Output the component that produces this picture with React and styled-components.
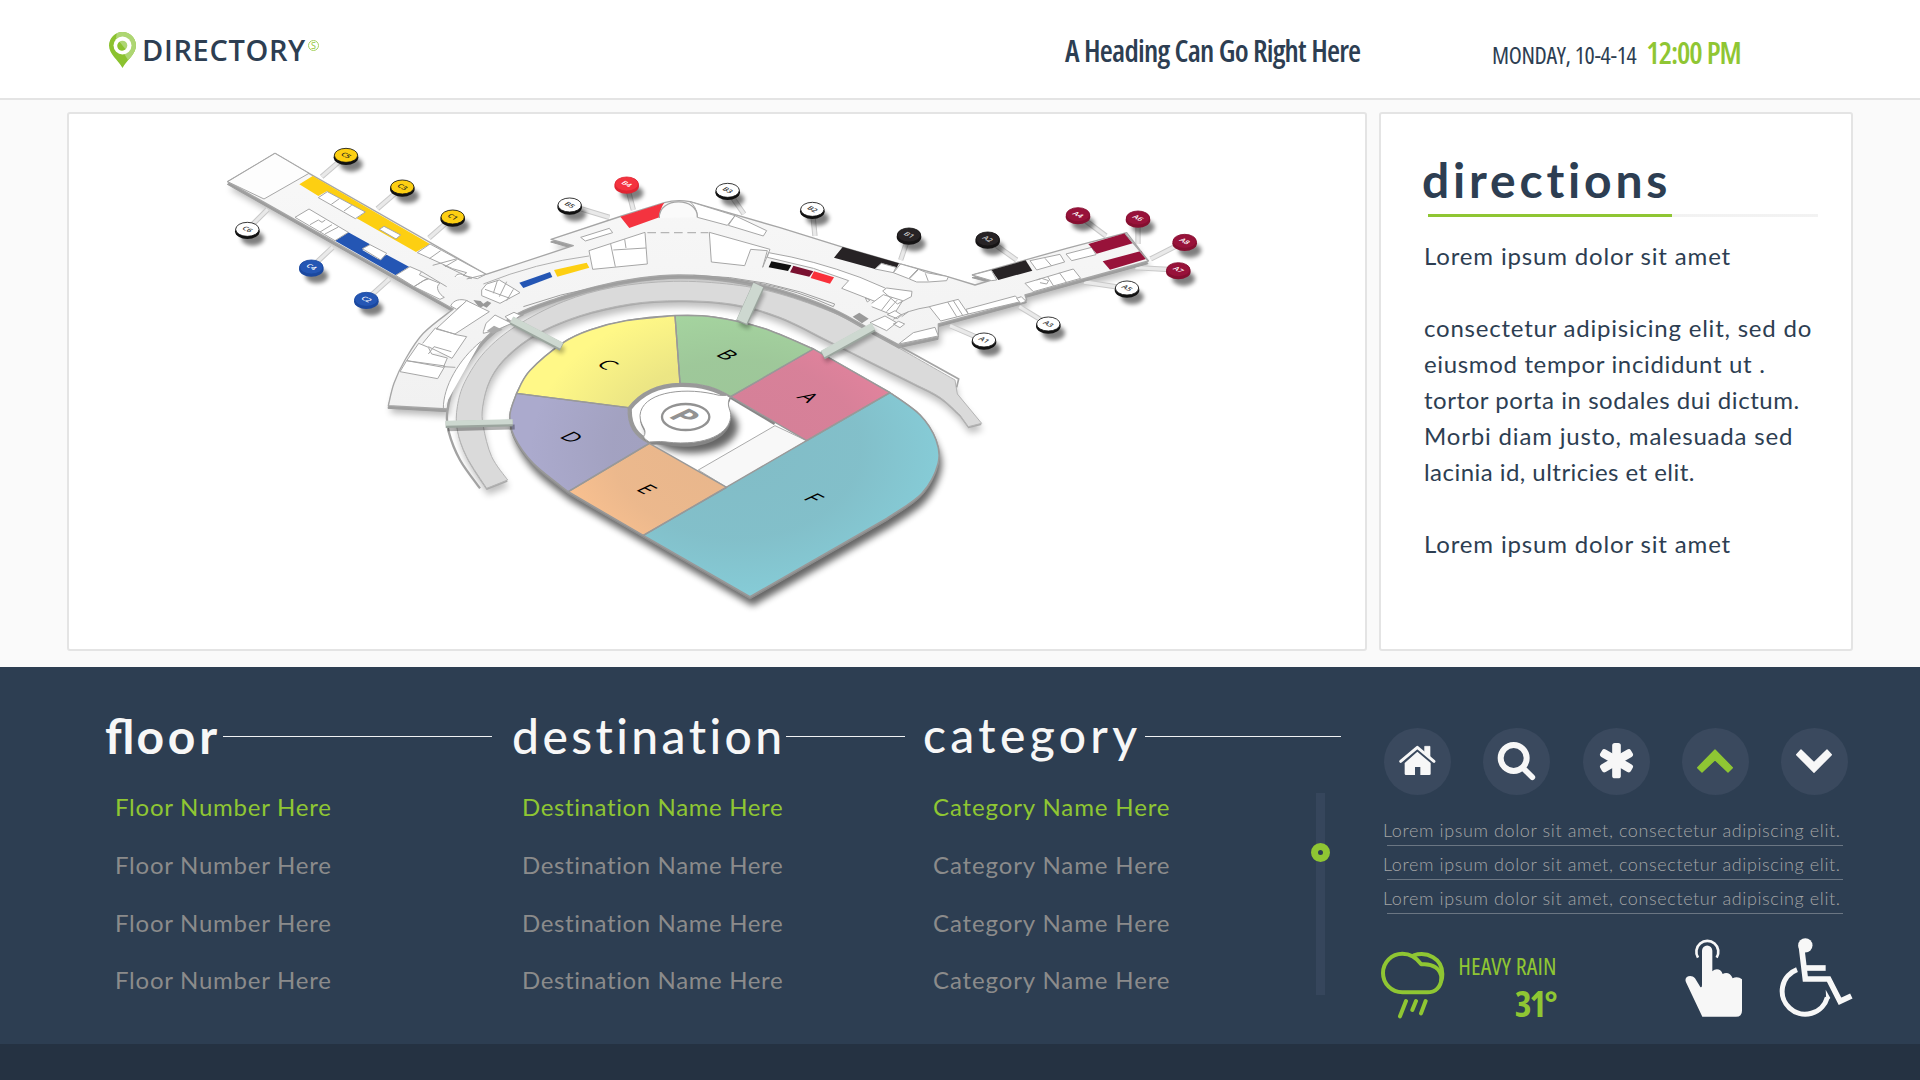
import React from "react";
import styled, { createGlobalStyle } from "styled-components";

const GlobalStyle = createGlobalStyle`
  * { box-sizing: border-box; }
  body { margin: 0; background: #fafafa; }
  h1, h2, p, ul { margin: 0; padding: 0; }
`;

const navy = "#2d3e52";
const green = "#8fc633";
const pale = "#f7f7f7";
const rounded = `Lato, "Open Sans", sans-serif`;
const humanist = `"Open Sans", "Noto Sans", sans-serif`;

/* ---------- page ---------- */

const Page = styled.div`
  width: 1920px;
  height: 1080px;
  display: flex;
  flex-direction: column;
  overflow: hidden;
  color: ${navy};
  font-family: ${rounded};
`;

const Header = styled.header`
  flex: none;
  height: 100px;
  display: grid;
  grid-template-columns: 955px 428px auto;
  align-items: start;
  padding-left: 109px;
  background: #fff;
  border-bottom: 2px solid #e4e4e4;
`;

const Brand = styled.div`
  display: flex;
  align-items: flex-start;
  padding-top: 32px;
`;

const BrandName = styled.div`
  margin: -2px 0 0 5px;
  padding-left: 1px;
  font: 600 29px/40px ${humanist};
  letter-spacing: 0.65px;
`;

const BrandMark = styled.span`
  margin: 8px 0 0 2px;
  width: 11px;
  height: 11px;
  border: 1px solid #a6d25f;
  border-radius: 50%;
  color: ${green};
  font: 400 9px/9px ${humanist};
  text-align: center;
`;

const Tagline = styled.h1`
  padding: 30px 0 0 1px;
  font: 600 30px/42px ${humanist};
  font-stretch: 75%;
  letter-spacing: -0.8px;
  word-spacing: 0.6px;
`;

const Clock = styled.div`
  display: flex;
  align-items: baseline;
  gap: 10px;
  padding-top: 32px;
  font: 500 24px/42px ${humanist};
  font-stretch: 75%;
  letter-spacing: -0.35px;
`;

const Time = styled.span`
  color: ${green};
  font-size: 30px;
  font-weight: 600;
  letter-spacing: -1.15px;
  word-spacing: 1px;
`;

/* ---------- upper panels ---------- */

const Panels = styled.main`
  flex: none;
  height: 567px;
  display: grid;
  grid-template-columns: 1300px 474px;
  gap: 12px;
  padding: 12px 67px 16px;
`;

const Card = styled.section`
  background: #fff;
  border: 2px solid #e4e4e4;
  border-radius: 3px;
  overflow: hidden;
`;

const MapCanvas = styled.svg`
  display: block;
  width: 1296px;
  height: 535px;
`;

const DirectionsCard = styled(Card)`
  padding: 36px 32px 0 41px;
`;

const DirectionsTitle = styled.h2`
  font: 700 48px/60px ${rounded};
  letter-spacing: 3.8px;
`;

const Rule = styled.div`
  display: flex;
  height: 3px;
  margin: 4px 0 21px 6px;
`;

const RuleSolid = styled.div`
  width: 244px;
  background: ${green};
`;

const RuleDots = styled.div`
  width: 146px;
  background: radial-gradient(circle, #d6d6d6 0.5px, transparent 0.8px) 0 0 / 2px 2px;
`;

const DirectionsText = styled.div`
  padding-left: 2px;
  font-size: 24px;
  line-height: 36px;
`;

const Line = styled.p`
  min-height: 36px;
  letter-spacing: ${(p) => p.$track}px;
  white-space: nowrap;
`;

/* ---------- lower panel ---------- */

const Lower = styled.section`
  flex: none;
  height: 377px;
  display: grid;
  grid-template-columns: 407px 411px 393px 62px 1fr;
  padding-left: 106px;
  background: ${navy};
`;

const FooterBar = styled.footer`
  flex: 1;
  background: #253242;
`;

const Column = styled.div`
  padding-top: 38px;
`;

const ColumnHead = styled.div`
  display: flex;
  align-items: center;
  height: 62px;
  width: ${(p) => p.$width}px;
  gap: ${(p) => p.$gap}px;

  &::after {
    content: "";
    flex: 1;
    height: 1px;
    background: #f0f2f4;
  }
`;

const ColumnTitle = styled.h2`
  color: ${pale};
  font: ${(p) => p.$weight || 500} 48px/62px ${rounded};
  letter-spacing: ${(p) => p.$track}px;
  margin: 0 ${(p) => -p.$track}px 0 -1px;
  padding-bottom: ${(p) => p.$raise || 0}px;
`;

const Ligature = styled.span`
  letter-spacing: 0;
  margin-right: 2px;
`;

const List = styled.ul`
  list-style: none;
  padding: 11px 0 0 ${(p) => p.$indent}px;
`;

const Item = styled.li`
  height: 57.8px;
  font-size: 24px;
  line-height: 58px;
  letter-spacing: ${(p) => p.$track}px;
  color: ${(p) => (p.$active ? green : "#8b8b8b")};
  white-space: nowrap;
`;

const ScrollTrack = styled.div`
  width: 9px;
  height: 202px;
  margin: 126px 0 0 -1px;
  background: #36465c;
`;

const ScrollKnob = styled.div`
  position: relative;
  left: -5px;
  top: 50px;
  width: 19px;
  height: 19px;
  border: 7px solid ${green};
  border-radius: 50%;
  background: ${navy};
`;

const Side = styled.aside`
  padding: 61px 0 0 5px;
`;

const Buttons = styled.div`
  display: flex;
  gap: 32.25px;
`;

const RoundButton = styled.button`
  width: 67px;
  height: 67px;
  padding: 0;
  border: 0;
  border-radius: 50%;
  background: #3a495e;
  color: ${(p) => (p.$active ? green : pale)};

  svg {
    display: block;
    width: 67px;
    height: 67px;
  }
`;

const Notes = styled.div`
  padding-top: 17px;
`;

const Note = styled.p`
  width: 460px;
  height: 34px;
  margin-left: -1px;
  color: #a4a5a6;
  font: 300 18px/37px ${rounded};
  letter-spacing: 0.61px;
  white-space: nowrap;
  background: linear-gradient(#6b7683, #6b7683) 4px 33px / 456px 1px no-repeat;
`;

const Extras = styled.div`
  display: flex;
  align-items: flex-start;
  margin: 24px 0 0 -3px;
`;

const CloudIcon = styled.svg`
  width: 64px;
  height: 68px;
  margin-top: 13px;
  color: ${green};
`;

const Weather = styled.div`
  width: 111px;
  padding-top: 11px;
  color: ${green};
  text-align: right;
  font-family: ${humanist};
  font-stretch: 75%;
`;

const Condition = styled.div`
  font-size: 24px;
  line-height: 34px;
  letter-spacing: 0.1px;
  margin-right: -0.5px;
`;

const Temperature = styled.div`
  font-size: 36px;
  font-weight: 700;
  line-height: 41px;
  letter-spacing: -2px;
  margin-right: 0.5px;
`;

const TouchIcon = styled.svg`
  width: 58px;
  height: 80px;
  margin-left: 129px;
  color: ${pale};
`;

const WheelchairIcon = styled.svg`
  width: 74px;
  height: 80px;
  margin-left: 36px;
  color: ${pale};
`;

/* ---------- icons ---------- */

const PinLogo = () => (
  <svg width="27" height="36" viewBox="0 0 27 36">
    <defs>
      <clipPath id="pin">
        <path d="M13.5 36C9 28 0 22 0 13.5a13.5 13.5 0 1 1 27 0C27 22 18 28 13.500 36z" />
      </clipPath>
    </defs>
    <g clipPath="url(#pin)">
      <path fill="#8bc22f" d="M0 0h27v36H0z" />
      <path fill="#aed673" d="M8 0h19v22l-8 6-5-8L7 6z" />
    </g>
    <circle cx="13.500" cy="13.500" r="9" fill="#fff" />
    <circle cx="13.500" cy="13.500" r="4.800" fill="#aed673" />
    <path d="M10.500 9.800a4.800 4.800 0 1 0 6 7.400z" fill="#8bc22f" />
  </svg>
);

const HomeIcon = () => (
  <svg viewBox="72 84 201 201" fill="currentColor">
    <path d="M194 139h16v33l-16-14z" stroke="currentColor" strokeWidth="2" strokeLinejoin="round" />
    <path d="M122 184l50-42 50 42" fill="none" stroke="currentColor" strokeWidth="9" strokeLinecap="round" strokeLinejoin="round" />
    <path d="M172 155l40 34v32q0 4-4 4h-27v-24h-16v24h-27q-4 0-4-4v-32z" />
  </svg>
);

const SearchIcon = () => (
  <svg viewBox="369 84 201 201" fill="none" stroke="currentColor">
    <circle cx="461" cy="174" r="39" strokeWidth="18" />
    <path d="M489 204l28 28" strokeWidth="17" strokeLinecap="round" />
  </svg>
);

const AsteriskIcon = () => (
  <svg viewBox="668.5 84 201 201" fill="currentColor">
    {[0, 60, 120].map((a) => (
      <rect key={a} x="756" y="129" width="26" height="106" rx="8" transform={`rotate(${a} 769 182)`} />
    ))}
  </svg>
);

const UpIcon = () => (
  <svg viewBox="966 84 201 201" fill="currentColor" stroke="currentColor" strokeWidth="4" strokeLinejoin="round">
    <path d="M1065 150l52 53-13 13-39-37-39 37-13-13z" />
  </svg>
);

const DownIcon = () => (
  <svg viewBox="1263 84 201 201" fill="currentColor" stroke="currentColor" strokeWidth="4" strokeLinejoin="round">
    <path d="M1362 217l-52-53 13-14 39 38 39-38 13 14z" />
  </svg>
);

const Cloud = () => (
  <CloudIcon viewBox="62 153 192 204" fill="none" stroke="currentColor" strokeWidth="12" strokeLinecap="round" strokeLinejoin="round">
    <path d="M126 277a57.500 57.500 0 0 1 0-116c26 0 44 14 57 32 34-4 60 14 60 42 0 26-18 42-42 42z" />
    <path d="M160 166c40-12 86 8 86 56 0 8-1 14-3 20" />
    <path d="M137 303l-18 46M167 303l-11 27M196 303l-14 37" />
  </CloudIcon>
);

const Touch = () => (
  <TouchIcon viewBox="975 117 174 240" fill="currentColor">
    <path d="M1014 176a33 33 0 1 1 56 0" fill="none" stroke="currentColor" strokeWidth="8" />
    <path d="M1026 155a15.500 15.500 0 0 1 31 0v62c9-9 25-9 31 8 10-6 24-4 30 13 9-5 20-4 28 3v94q0 18-18 18h-101l-49-103c-8-18 16-26 27-12l16 26q5 3 5-6z" />
  </TouchIcon>
);

const Wheelchair = () => (
  <WheelchairIcon viewBox="1257 117 222 240" fill="none" stroke="currentColor" strokeWidth="17">
    <circle cx="1336" cy="139" r="21.500" fill="currentColor" stroke="none" />
    <path d="M1324 140l12 100h70l34 67 34-16" />
    <path d="M1336 207h61" />
    <path d="M1311 212a69 69 0 1 0 91 83" strokeWidth="15" />
    <path d="M1397 272l14 25-12 10z" fill="currentColor" stroke="none" />
  </WheelchairIcon>
);

/* ---------- terminal map ---------- */

/* Smooth open curve through a list of points. */
const curve = (pts, start = "M") => {
  let d = `${start}${pts[0][0]} ${pts[0][1]}`;
  for (let i = 0; i < pts.length - 1; i++) {
    const a = pts[i - 1] || pts[i];
    const b = pts[i];
    const c = pts[i + 1];
    const e = pts[i + 2] || c;
    d += `C${b[0] + (c[0] - a[0]) / 6} ${b[1] + (c[1] - a[1]) / 6} ${c[0] - (e[0] - b[0]) / 6} ${c[1] - (e[1] - b[1]) / 6} ${c[0]} ${c[1]}`;
  }
  return d;
};

const innerWall = [[1258, 555], [1180, 513], [1060, 447], [900, 389], [750, 356], [600, 345], [480, 354], [350, 379], [230, 415], [110, 462], [20, 530], [-50, 620], [-88, 700], [-98, 747]];
const pierWall = [[-275, 737], [-258, 670], [-225, 600], [-170, 520], [-80, 447]];
const terminal =
  "M-757 65L-615-20L-513 40L18 343L280 257L213 238L425 168L553 128Q590 118 630 125L900 203L1090 262L1255 310L1410 352L1485 375L1535 360L1477 345L1760 265L1940 218L2005 303L1635 405L1640 420L1375 492V530" +
  curve(innerWall, "L") + curve(pierWall, "L") + "Z";

const roadOuter = [[20, 985], [-40, 890], [-68, 810], [-68, 740], [-45, 665], [15, 575], [110, 497], [250, 425], [400, 382], [580, 364], [760, 374], [900, 402], [1060, 458], [1160, 510], [1260, 566], [1425, 660]];
const roadInner = [[1440, 765], [1380, 712], [1300, 670], [1160, 600], [1050, 545], [900, 472], [760, 433], [600, 422], [450, 432], [300, 467], [170, 522], [80, 590], [30, 660], [8, 740], [10, 800], [35, 890], [83, 960]];
const road = curve(roadOuter) + "L1432 702L1505 790L1465 800" + curve(roadInner, "L") + "Z";

const arenaEdge =
  curve([[110, 700], [150, 632], [250, 548], [330, 510], [440, 482], [585, 467], [700, 471], [850, 505], [1000, 567]]) +
  "L1230 698" +
  curve([[1230, 698], [1320, 765], [1368, 840], [1374, 910], [1325, 1000], [1220, 1075]], "L") +
  "L810 1310L265 995" +
  curve([[265, 995], [160, 910], [103, 830], [90, 765], [110, 700]], "L") + "Z";

const sectors = [
  { id: "C", fill: "#fff887", x: 383, y: 614, d: curve([[110, 700], [150, 632], [250, 548], [330, 510], [440, 482], [585, 467]]) + "L600 670Q500 672 445 743Z" },
  { id: "B", fill: "#a6d6a0", x: 742, y: 585, d: curve([[585, 467], [700, 471], [850, 505], [1000, 567]]) + "L752 710Q690 668 600 670Z" },
  { id: "A", fill: "#e8849f", x: 985, y: 712, d: "M752 710L1000 567L1230 698L980 842Z" },
  { id: "D", fill: "#abaacd", x: 275, y: 832, d: "M110 700L445 743Q440 820 508 850L265 995" + curve([[265, 995], [160, 910], [103, 830], [90, 765], [110, 700]], "L") + "Z" },
  { id: "E", fill: "#ffc491", x: 500, y: 988, d: "M508 850L740 982L490 1126L265 995Z" },
  { id: "F", fill: "#86ccd7", x: 1001, y: 1014, d: "M490 1126L980 842L1230 698" + curve([[1230, 698], [1320, 765], [1368, 840], [1374, 910], [1325, 1000], [1220, 1075]], "L") + "L810 1310Z" },
];

/* Gate badges: label, position, stalk end, face colour, rim colour, text colour. */
const YEL = ["#fdcf12", "#111", "#222"];
const WHT = ["#fff", "#111", "#333"];
const BLU = ["#2456b4", "#1b489f", "#fff"];
const RED = ["#f4333f", "#e02532", "#fff"];
const BLK = ["#272325", "#161415", "#ccc"];
const MAR = ["#98123a", "#850f30", "#fff"];
const gates = [
  ["C5", -402, -13, -475, 50, YEL], ["C3", -233, 82, -308, 146, YEL], ["C1", -82, 172, -153, 234, YEL],
  ["C6", -698, 209, -637, 148, WHT], ["C4", -506, 322, -442, 262, BLU], ["C2", -341, 419, -272, 357, BLU],
  ["B5", 269, 136, 388, 172, WHT], ["B4", 440, 73, 460, 150, RED], ["B3", 743, 92, 792, 162, WHT],
  ["B2", 997, 149, 1005, 228, WHT], ["B1", 1287, 226, 1262, 300, BLK], ["A2", 1523, 238, 1610, 300, BLK],
  ["A4", 1794, 165, 1878, 228, MAR], ["A6", 1974, 175, 1974, 252, MAR], ["A8", 2114, 245, 2012, 297, MAR],
  ["A7", 2095, 330, 1966, 323, MAR], ["A5", 1941, 385, 1812, 366, WHT], ["A3", 1705, 493, 1618, 440, WHT],
  ["A1", 1512, 541, 1410, 497, WHT],
];

const bridges = [
  [[95, 478], [245, 557], 20], [[835, 375], [785, 485], 32], [[1180, 498], [1028, 582], 22], [[-103, 790], [98, 785], 15],
];

const Shop = ({ d, fill = "#fff", plain }) => (
  <path d={d} fill={fill} stroke={plain ? "none" : "#a6a6a6"} strokeWidth="3" strokeLinejoin="round" />
);

const WestPier = () => (
  <g transform="translate(-810 -90)">
    <Shop d="M53 155L195 70L297 130L162 207Z" fill="#fdfdfd" />
    <Shop plain fill="#fdcf12" d="M268 163L308 138L660 342L618 366L440 265L465 247L350 184L325 198Z" />
    <Shop d="M325 203L352 185L466 246L436 266ZM364 223L388 206M402 243L425 226M508 298L522 289L572 315L558 327Z" />
    <Shop plain fill="#2456b4" d="M375 332L415 307L480 343L457 360L505 388L530 374L597 410L557 436Z" />
    <Shop d="M457 356L480 344L530 370L512 390Z" />
    <Shop d="M255 262L297 237L415 307L375 332ZM300 284L325 270L336 277L346 270M330 306L366 284M345 312L385 291" />
    <Shop d="M622 368L660 342L828 433L802 446L760 436L770 428L728 416ZM658 386L692 362M668 406L738 387M705 410L742 388M735 441C740 430 756 430 762 437" />
    <Shop d="M557 436L600 410L635 425L628 434L655 447L640 452L612 470ZM612 470L652 445L690 460C672 470 690 496 703 502L690 508ZM635 425L710 470" />
    <Shop d="M722 528C730 510 750 505 772 512L740 538Z" />
    <Shop d="M815 480L830 462L868 450L915 478L930 488L870 520L815 497ZM825 478L900 505M862 452L850 490M890 455L868 500M910 478L890 512" />
    <Shop plain fill="#999" d="M790 510l22 3 8 8 12-8 12 6-14 14-10-5-10 5-8-8z" />
    <Shop d="M678 597L770 512L838 545L735 612ZM638 640L676 594L738 614L770 620L726 685L655 650M590 692L626 640L655 652L665 672L712 684L700 712ZM655 672L672 650L724 665M570 725L590 692L705 708L683 746ZM700 710L736 712M700 835C700 770 745 690 812 635" />
    <Shop d="M820 605L828 580L855 555L905 580L860 600L820 610Z" />
    <Shop plain fill="#aaa" d="M830 603l22-16 26 12-30 12z" />
    <Shop d="M885 560L912 547L932 556L905 575Z" />
    <path d="M770 447L828 433M785 446L700 405" stroke="#a6a6a6" strokeWidth="3" fill="none" />
    <Shop plain fill="#2456b4" d="M928 458L1020 426L1027 441L940 474Z" />
    <Shop plain fill="#fdcf12" d="M1032 420L1130 398L1138 413L1042 440Z" />
  </g>
);

const Concourse = () => (
  <g>
    <Shop plain fill="#f4333f" d="M421 170L553 128Q540 146 538 172L448 204Z" />
    <Shop d="M302 232L388 205L398 218L316 243Z" />
    <Shop d="M327 272L495 217L502 312L338 328ZM392 252L406 320M434 238L438 264M400 270L498 264" />
    <path d="M502 218H685" stroke="#b5b5b5" strokeWidth="4" strokeDasharray="26 14" fill="none" />
    <Shop d="M688 217L870 268L848 322L862 272L812 268L794 317L694 306Z" />
    <Shop d="M630 125L765 167L742 196L652 172Q650 140 630 125ZM765 167L860 212L850 228L745 196Z" />
    <path d="M538 174C535 110 655 110 652 172" fill="#fafafa" stroke="#a6a6a6" strokeWidth="4" />
    <Shop plain fill="#111" d="M874 304L934 316L924 333L866 322Z" />
    <Shop plain fill="#7a1130" d="M940 317L1000 334L988 350L930 337Z" />
    <Shop plain fill="#f9303a" d="M1002 334L1062 352L1050 371L992 354Z" />
    <path d="M10 372Q170 308 327 288" fill="none" stroke="#b0b0b0" strokeWidth="3" />
    <Shop d="M866 278Q1000 300 1140 352L1215 384L1235 400L1200 430L1085 385L1106 362L1000 325L862 292Z" />
    <path d="M130 440Q350 362 600 353T1060 440L1064 432Q860 350 640 346" fill="none" stroke="#9f9f9f" strokeWidth="3" />
  </g>
);

const EastPier = () => (
  <g transform="translate(900 0)">
    <Shop plain fill="#272325" d="M188 261L357 310L350 323L305 310L285 327L162 293Z" />
    <Shop d="M285 327L304 310L348 322L340 338ZM340 338L362 312L414 327L386 356ZM388 357L416 328L440 338L505 350L500 362L445 366L410 366ZM436 340L445 364" />
    <Shop d="M308 393L320 384L396 394L394 410L352 432ZM275 430L310 404L368 422L340 466L275 440M305 450L335 412M320 455L352 420M256 414L270 420L262 426Z" />
    <Shop d="M270 488L315 468L350 488L320 512ZM340 492L356 484L374 492L360 503ZM322 464L345 452L365 465L352 476Z" />
    <Shop plain fill="#999" d="M218 470l20-12 28 18-20 14z" />
    <path d="M340 478Q380 450 450 440M365 470L385 455" stroke="#a6a6a6" strokeWidth="3" fill="none" />
    <Shop d="M448 440L535 418L565 462L482 483ZM503 426L530 470M520 422L548 466M558 448L706 408L722 425L565 462Z" />
    <Shop d="M356 552L400 518L465 502L475 528Z" />
    <Shop d="M710 415L724 410L738 424L722 430Z" />
    <Shop plain fill="#272325" d="M634 330L737 301L757 332L655 360Z" />
    <Shop d="M577 345L634 330L650 360L635 362Z" />
    <Shop d="M750 302L840 283L854 306L770 330ZM795 295L815 318M858 282L935 262L948 284L875 302Z" />
    <Shop d="M735 370L880 327L902 355L760 395ZM770 360L785 355L806 362L800 372L780 368M803 350L822 380M838 338L860 368" />
    <Shop plain fill="#98123a" d="M925 252L1035 220L1058 250L950 281Z" />
    <Shop plain fill="#98123a" d="M968 304L1083 273L1098 297L990 329Z" />
    <path d="M1035 220L1105 303" stroke="#a6a6a6" strokeWidth="4" fill="none" />
  </g>
);

const letterFont = `"Open Sans", "Noto Sans", sans-serif`;

const TerminalMap = () => (
  <MapCanvas viewBox="69 114 1296 535" role="img">
    <defs>
      <filter id="soft" x="-20%" y="-20%" width="140%" height="150%">
        <feGaussianBlur stdDeviation="11" />
      </filter>
      <filter id="small" x="-50%" y="-50%" width="200%" height="200%">
        <feGaussianBlur stdDeviation="7" />
      </filter>
      <radialGradient id="dim" gradientUnits="userSpaceOnUse" cx="770" cy="870" r="620" gradientTransform="matrix(1 0 0 .72 0 240)">
        <stop offset="0" stopColor="#6a6a70" stopOpacity=".16" />
        <stop offset=".6" stopColor="#6a6a70" stopOpacity=".13" />
        <stop offset="1" stopColor="#6a6a70" stopOpacity="0" />
      </radialGradient>
      <linearGradient id="floorTone" x1="0" x2="0" y1="0" y2="1">
        <stop offset="0" stopColor="#f8f8f8" />
        <stop offset="1" stopColor="#f1f1f1" />
      </linearGradient>
    </defs>
    <g transform="translate(480 160) scale(.33333)">
      <path d={terminal} transform="translate(6 22)" fill="#000" opacity=".28" filter="url(#soft)" />
      <path d={road} transform="translate(4 20)" fill="#000" opacity=".25" filter="url(#soft)" />

      {gates.map(([id, x, y, ex, ey]) => (
        <g key={id} strokeLinecap="butt">
          <path d={`M${x} ${y}L${ex} ${ey}`} stroke="#c9c9c9" strokeWidth="16" />
          <path d={`M${x} ${y}L${ex} ${ey}`} stroke="#e9e9e9" strokeWidth="10" />
        </g>
      ))}

      <path d={terminal} transform="translate(-1 8)" fill="#9d9d9d" stroke="#9d9d9d" strokeWidth="3" />
      <path d={terminal} fill="url(#floorTone)" stroke="#a6a6a6" strokeWidth="4" strokeLinejoin="round" />

      <path d={curve([[0, 985], [-60, 900], [-94, 815], [-98, 755], [-75, 670], [-20, 580], [60, 503], [130, 462]])} fill="none" stroke="#a2a2a2" strokeWidth="7" />
      <path d={road} transform="translate(0 5)" fill="#aaa" />
      <path d={road} fill="#dadada" stroke="#b4b4b4" strokeWidth="3" />
      <path d={curve(innerWall.slice(0, 12))} transform="translate(0 9)" fill="none" stroke="#a4a4a4" strokeWidth="5" />
      <path d="M1240 548L1436 657L1430 682" fill="none" stroke="#a4a4a4" strokeWidth="5" />

      <WestPier />
      <Concourse />
      <EastPier />

      <path d={arenaEdge} transform="translate(8 28)" fill="#000" opacity=".6" filter="url(#soft)" />
      <path d={arenaEdge} transform="translate(0 7)" fill="#8d8d8d" stroke="#8d8d8d" strokeWidth="3" />
      <path d={arenaEdge} fill="#fff" stroke="#9a9a9a" strokeWidth="5" strokeLinejoin="round" />
      <clipPath id="court">
        <path d="M600 670Q690 668 752 710L980 842L740 982L508 850Q440 820 445 743Q500 672 600 670Z" />
      </clipPath>
      <g clipPath="url(#court)">
        <path d="M655 930L885 797L980 842L740 982Z" fill="#f8f8f8" stroke="#aaa" strokeWidth="3" />
        <path d="M600 670Q690 668 752 710M445 743Q500 672 600 670M508 850Q440 820 445 743" fill="none" stroke="#777" strokeWidth="22" opacity=".75" />
        <path d="M752 710L885 790" fill="none" stroke="#888" strokeWidth="12" />
        <ellipse cx="636" cy="800" rx="138" ry="80" fill="#000" opacity=".6" filter="url(#soft)" />
      </g>
      <path d="M508 850Q540 846 580 854C700 864 755 812 752 768C752 750 738 738 752 712L740 706Q715 708 700 702C600 680 485 700 480 770C480 800 500 806 494 826Q482 832 508 850Z" transform="translate(0 5)" fill="#858585" />
      <path d="M508 846Q540 842 580 848C700 856 755 808 752 764C752 748 738 736 750 712L740 706Q715 708 700 702C600 680 485 700 480 766C480 798 500 804 494 824Q484 832 508 846Z" fill="#fff" stroke="#999" strokeWidth="3" />

      {sectors.map((s) => (
        <path key={s.id} d={s.d} fill={s.fill} />
      ))}
      {sectors.map((s) => (
        <path key={s.id} d={s.d} fill="url(#dim)" stroke="#999" strokeWidth="4" strokeLinejoin="round" />
      ))}
      {sectors.map((s) => (
        <text key={s.id} transform={`matrix(.82 .42 -.87 .4 ${s.x} ${s.y})`} y="23" textAnchor="middle" fontFamily={letterFont} fontSize="66" fontWeight="500" fill="#000">
          {s.id}
        </text>
      ))}
      <ellipse cx="617" cy="771" rx="71" ry="39" fill="none" stroke="#929292" strokeWidth="7" />
      <text transform="matrix(.82 .45 -.87 .42 615 769)" y="33" textAnchor="middle" fontFamily={letterFont} fontSize="94" fontWeight="700" fill="#929292">
        P
      </text>

      {bridges.map(([a, b, w]) => (
        <g key={a.join()}>
          <path d={`M${a}L${b}`} transform="translate(6 16)" stroke="#000" opacity=".3" strokeWidth={w} filter={a[1] === 790 ? undefined : "url(#small)"} />
          <path d={`M${a}L${b}`} transform="translate(0 4)" stroke="#9ba59e" strokeWidth={w + 5} />
          <path d={`M${a}L${b}`} stroke="#cdd8d0" strokeWidth={w} />
        </g>
      ))}

      {gates.map(([id, x, y, , , [face, rim, ink]]) => (
        <g key={id}>
          <ellipse cx={x + 16} cy={y + 26} rx="34" ry="22" fill="#000" opacity=".5" filter="url(#small)" />
          <ellipse cx={x} cy={y + 5} rx="37" ry="23" fill={rim} />
          <ellipse cx={x} cy={y - 1} rx="35" ry="21" fill={face} stroke={rim} strokeWidth="2.500" />
          <text transform={`matrix(.82 .42 -.7 .5 ${x} ${y - 1})`} y="8" textAnchor="middle" fontFamily={letterFont} fontSize="24" fontWeight="600" fill={ink}>
            {id}
          </text>
        </g>
      ))}
    </g>
  </MapCanvas>
);

/* ---------- composition ---------- */

const directionsCopy = [
  ["Lorem ipsum dolor sit amet", 0.84],
  ["", 0],
  ["consectetur adipisicing elit, sed do", 0.78],
  ["eiusmod tempor incididunt ut .", 0.66],
  ["tortor porta in sodales dui dictum.", 0.56],
  ["Morbi diam justo, malesuada sed", 0.83],
  ["lacinia id, ultricies et elit.", 0.46],
  ["", 0],
  ["Lorem ipsum dolor sit amet", 0.84],
];

const Options = ({ label, track, indent }) => (
  <List $indent={indent}>
    {[0, 1, 2, 3].map((i) => (
      <Item key={i} $active={i === 0} $track={track}>
        {label}
      </Item>
    ))}
  </List>
);

export default function App() {
  return (
    <Page>
      <GlobalStyle />
      <Header>
        <Brand>
          <PinLogo />
          <BrandName>DIRECTORY</BrandName>
          <BrandMark>S</BrandMark>
        </Brand>
        <Tagline>A Heading Can Go Right Here</Tagline>
        <Clock>
          MONDAY, 10-4-14 <Time>12:00 PM</Time>
        </Clock>
      </Header>

      <Panels>
        <Card>
          <TerminalMap />
        </Card>
        <DirectionsCard>
          <DirectionsTitle>directions</DirectionsTitle>
          <Rule>
            <RuleSolid />
            <RuleDots />
          </Rule>
          <DirectionsText>
            {directionsCopy.map(([text, track], i) => (
              <Line key={i} $track={track}>
                {text}
              </Line>
            ))}
          </DirectionsText>
        </DirectionsCard>
      </Panels>

      <Lower>
        <Column>
          <ColumnHead $width={386} $gap={6}>
            <ColumnTitle $weight={700} $track={3.8}>
              <Ligature>fl</Ligature>oor
            </ColumnTitle>
          </ColumnHead>
          <Options label="Floor Number Here" track={0.75} indent={9} />
        </Column>
        <Column>
          <ColumnHead $width={392} $gap={4}>
            <ColumnTitle $track={3.4}>destination</ColumnTitle>
          </ColumnHead>
          <Options label="Destination Name Here" track={0.62} indent={9} />
        </Column>
        <Column>
          <ColumnHead $width={417} $gap={8}>
            <ColumnTitle $track={4.35} $raise={3}>category</ColumnTitle>
          </ColumnHead>
          <Options label="Category Name Here" track={0.88} indent={9} />
        </Column>
        <ScrollTrack>
          <ScrollKnob />
        </ScrollTrack>
        <Side>
          <Buttons>
            <RoundButton><HomeIcon /></RoundButton>
            <RoundButton><SearchIcon /></RoundButton>
            <RoundButton><AsteriskIcon /></RoundButton>
            <RoundButton $active><UpIcon /></RoundButton>
            <RoundButton><DownIcon /></RoundButton>
          </Buttons>
          <Notes>
            {[0, 1, 2].map((i) => (
              <Note key={i}>Lorem ipsum dolor sit amet, consectetur adipiscing elit.</Note>
            ))}
          </Notes>
          <Extras>
            <Cloud />
            <Weather>
              <Condition>HEAVY RAIN</Condition>
              <Temperature>31°</Temperature>
            </Weather>
            <Touch />
            <Wheelchair />
          </Extras>
        </Side>
      </Lower>
      <FooterBar />
    </Page>
  );
}
